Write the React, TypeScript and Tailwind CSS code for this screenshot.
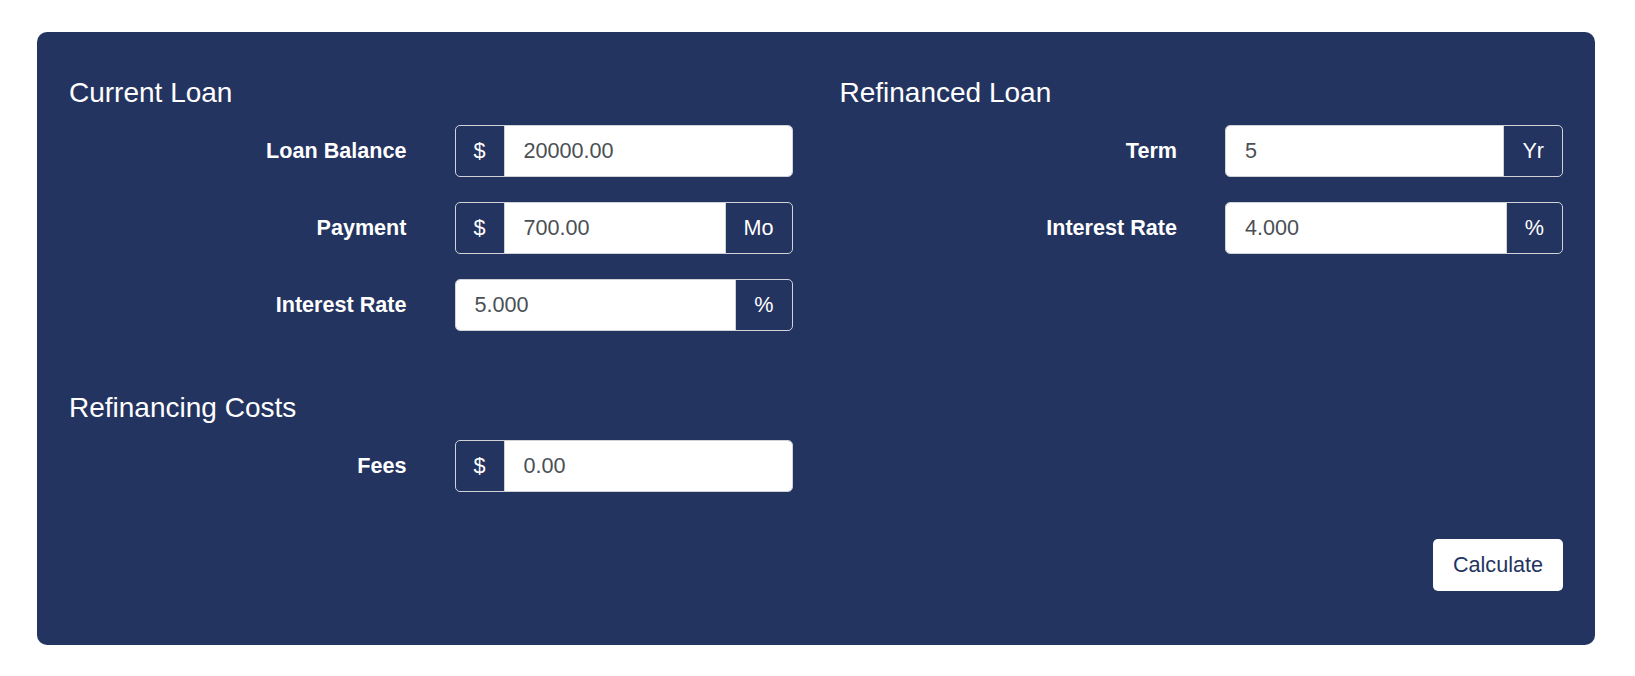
import React from "react";

type Field = {
  label: string;
  value: string;
  prefix?: string;
  suffix?: string;
};

const currentLoan: Field[] = [
  { label: "Loan Balance", value: "20000.00", prefix: "$" },
  { label: "Payment", value: "700.00", prefix: "$", suffix: "Mo" },
  { label: "Interest Rate", value: "5.000", suffix: "%" },
];

const refinancedLoan: Field[] = [
  { label: "Term", value: "5", suffix: "Yr" },
  { label: "Interest Rate", value: "4.000", suffix: "%" },
];

const costs: Field[] = [{ label: "Fees", value: "0.00", prefix: "$" }];

function FieldRow({ field }: { field: Field }) {
  return (
    <div className="grid grid-cols-[1fr_338px] items-center gap-x-[48px]">
      <label className="text-right text-[21.6px] font-bold text-white leading-[32px]">
        {field.label}
      </label>
      <div className="flex h-[52px] rounded-[5px] border border-[#cfd3d8] overflow-hidden">
        {field.prefix && (
          <span className="flex items-center px-[18px] text-[21.6px] text-white border-r border-[#cfd3d8]">
            {field.prefix}
          </span>
        )}
        <input
          readOnly
          value={field.value}
          className="flex-1 min-w-0 bg-white px-[19px] text-[21.6px] text-[#4a4f55] outline-none"
        />
        {field.suffix && (
          <span className="flex items-center px-[18px] text-[21.6px] text-white border-l border-[#cfd3d8]">
            {field.suffix}
          </span>
        )}
      </div>
    </div>
  );
}

function Section({ title, fields }: { title: string; fields: Field[] }) {
  return (
    <div>
      <h4 className="text-[28px] leading-[34px] font-normal text-white">{title}</h4>
      <div className="mt-[15px] flex flex-col gap-[25px]">
        {fields.map((f) => (
          <FieldRow key={f.label} field={f} />
        ))}
      </div>
    </div>
  );
}

export default function App() {
  return (
    <div className="min-h-screen bg-white pl-[37px] pr-[40px] pt-[32px] font-['Liberation_Sans',Arial,sans-serif]">
      <div className="rounded-[10px] bg-[#243461] px-[32px] pt-[44px] pb-[54px]">
        <div className="grid grid-cols-2 gap-x-[47px]">
          {/* Left column */}
          <div className="flex flex-col gap-[60px]">
            <Section title="Current Loan" fields={currentLoan} />
            <Section title="Refinancing Costs" fields={costs} />
          </div>
          {/* Right column */}
          <div>
            <Section title="Refinanced Loan" fields={refinancedLoan} />
          </div>
        </div>

        <div className="mt-[47px] flex justify-end">
          <button className="h-[52px] rounded-[5px] bg-white px-[20px] text-[21.6px] text-[#243461]">
            Calculate
          </button>
        </div>
      </div>
    </div>
  );
}
